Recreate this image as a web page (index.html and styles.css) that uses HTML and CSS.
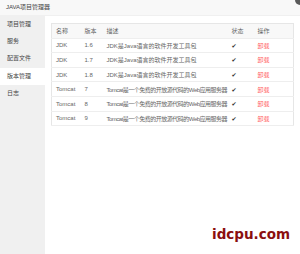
FILE: index.html
```html
<!DOCTYPE html>
<html lang="zh-CN">
<head>
  <meta charset="UTF-8">
  <title>JAVA项目管理器</title>
  <link rel="stylesheet" href="styles.css">
</head>
<body>
  <div class="layer">
    <div class="layer-title">JAVA项目管理器</div>
    <span class="layer-close"></span>
    <div class="layer-body">
      <ul class="side-menu">
        <li>项目管理</li>
        <li>服务</li>
        <li>配置文件</li>
        <li class="active">版本管理</li>
        <li>日志</li>
      </ul>
      <div class="content">
        <table class="version-table">
          <colgroup>
            <col class="c-name">
            <col class="c-ver">
            <col class="c-desc">
            <col class="c-state">
            <col class="c-op">
          </colgroup>
          <thead>
            <tr><th>名称</th><th>版本</th><th>描述</th><th>状态</th><th>操作</th></tr>
          </thead>
          <tbody>
            <tr><td>JDK</td><td>1.6</td><td>JDK是Java语言的软件开发工具包</td><td class="ok">✔</td><td class="op">卸载</td></tr>
            <tr><td>JDK</td><td>1.7</td><td>JDK是Java语言的软件开发工具包</td><td class="ok">✔</td><td class="op">卸载</td></tr>
            <tr><td>JDK</td><td>1.8</td><td>JDK是Java语言的软件开发工具包</td><td class="ok">✔</td><td class="op">卸载</td></tr>
            <tr><td>Tomcat</td><td>7</td><td class="long">Tomcat是一个免费的开放源代码的Web应用服务器</td><td class="ok">✔</td><td class="op">卸载</td></tr>
            <tr><td>Tomcat</td><td>8</td><td class="long">Tomcat是一个免费的开放源代码的Web应用服务器</td><td class="ok">✔</td><td class="op">卸载</td></tr>
            <tr><td>Tomcat</td><td>9</td><td class="long">Tomcat是一个免费的开放源代码的Web应用服务器</td><td class="ok">✔</td><td class="op">卸载</td></tr>
          </tbody>
        </table>
      </div>
    </div>
    <div class="watermark">idcpu.com</div>
  </div>
</body>
</html>
```

FILE: styles.css
```css
html, body {
  margin: 0;
  padding: 0;
  height: 100%;
  overflow: hidden;
}

body {
  font-family: 'Liberation Sans', 'Noto Sans CJK SC', sans-serif;
  font-size: 6px;
  color: #666;
  background: #fff;
}

.layer {
  position: relative;
  height: 254px;
  display: flex;
  flex-direction: column;
}

.layer-title {
  height: 16px;
  line-height: 15px;
  padding-left: 6px;
  background: #f8f8f8;
  color: #444;
  font-size: 6px;
  border-bottom: 1px solid #f0f0f0;
  box-sizing: border-box;
}

/* close button peeking in at the corner */
.layer-close {
  position: absolute;
  left: 295px;
  top: -5px;
  width: 10px;
  height: 10px;
  border-radius: 50%;
  background: #5a5a5a;
}

.layer-body {
  flex: 1;
  display: flex;
}

.side-menu {
  list-style: none;
  margin: 0;
  padding: 0;
  width: 46px;
  background: #f0f0f0;
}

.side-menu li {
  height: 17.2px;
  line-height: 17.2px;
  padding-left: 7px;
  color: #444;
}

.side-menu li.active {
  background: #fff;
}

.content {
  flex: 1;
  padding: 7px 6px 0 6px;
}

.version-table {
  width: 242px;
  table-layout: fixed;
  border-collapse: collapse;
  border: 1px solid #e6e6e6;
}

.c-name { width: 29px; }
.c-ver { width: 22px; }
.c-desc { width: 125px; }
.c-state { width: 26px; }
.c-op { width: 40px; }

.version-table th,
.version-table td {
  height: 14.6px;
  padding: 0 0 0 4px;
  text-align: left;
  font-weight: normal;
  white-space: nowrap;
  overflow: hidden;
  border-bottom: 1px solid #eee;
  box-sizing: border-box;
}

.version-table thead tr {
  background: #f8f8f8;
}

.version-table td.long {
  letter-spacing: -0.5px;
}

.version-table td.ok {
  color: #333;
  font-family: 'DejaVu Sans', sans-serif;
  font-size: 6px;
}

.version-table td.op {
  color: #ff5a5a;
}

.watermark {
  position: absolute;
  left: 212px;
  top: 226px;
  font-family: 'DejaVu Sans', sans-serif;
  font-weight: bold;
  font-size: 13.5px;
  color: #8b0f0f;
}
```
